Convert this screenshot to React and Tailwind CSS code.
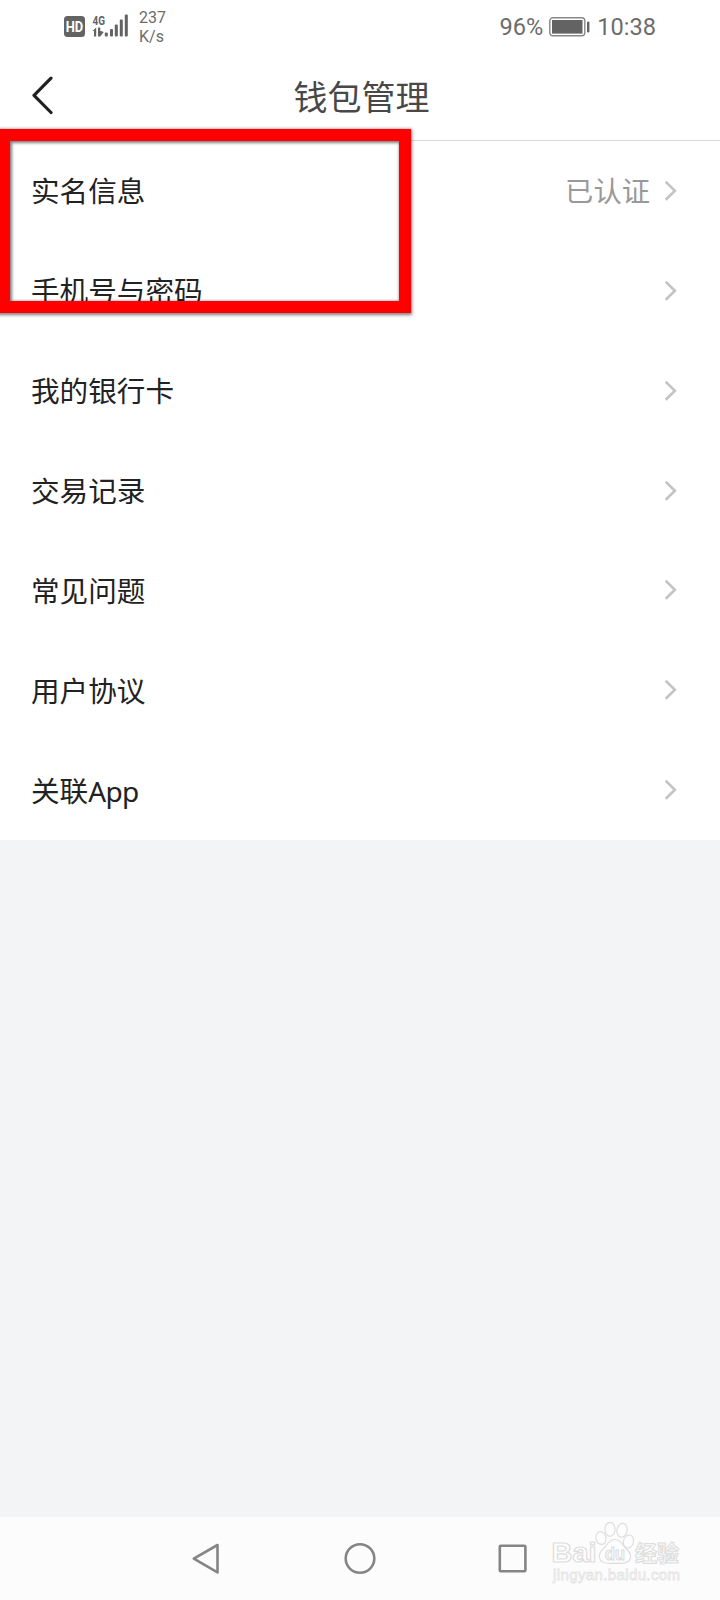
import React from "react";

const rows = [
  { label: "实名信息", value: "已认证" },
  { label: "手机号与密码" },
  { label: "我的银行卡" },
  { label: "交易记录" },
  { label: "常见问题" },
  { label: "用户协议" },
  { label: "关联", suffix: "App" },
];

function SignalIcons() {
  return (
    <svg width="68" height="28" viewBox="0 0 68 28" fill="#636363">
      <rect x="0" y="4" width="21" height="21" rx="3.5" />
      <text x="10.5" y="20" textAnchor="middle" fontFamily="Roboto, sans-serif" fontWeight="700" fontSize="15" textLength="17.5" lengthAdjust="spacingAndGlyphs" fill="#fff">HD</text>
      <text x="28.5" y="12.8" fontFamily="Roboto, sans-serif" fontWeight="700" fontSize="13.5" textLength="12.5" lengthAdjust="spacingAndGlyphs">4G</text>
      <path d="M28.5 19l3.7-3.6v9.2h-2.2V19zM34 15.4h2.2v3.3l3.600 1.200-3.600 4.700H34z" />
      <rect x="40.8" y="20.5" width="3" height="4" rx="1" />
      <rect x="46" y="17" width="3" height="7.5" rx="1" />
      <rect x="50.8" y="12.5" width="3" height="12" rx="1" />
      <rect x="55.8" y="7.5" width="3" height="17" rx="1" />
      <rect x="60.8" y="2.5" width="3" height="22" rx="1" />
    </svg>
  );
}

function Battery() {
  return (
    <svg width="42" height="20" viewBox="0 0 42 20" fill="none">
      <rect x="0.8" y="0.8" width="35" height="18" rx="3" stroke="#888" strokeWidth="1.4" />
      <rect x="3" y="3" width="30.5" height="13.6" fill="#636363" />
      <rect x="38" y="4.5" width="2.4" height="11" rx="1" fill="#636363" />
    </svg>
  );
}

function StatusBar() {
  return (
    <div className="flex h-[56px] shrink-0 items-start justify-between pl-[64px] pr-[64px] font-[Roboto,sans-serif] text-[#6c6c6c]">
      <div className="flex items-start">
        <div className="pt-[12px]">
          <SignalIcons />
        </div>
        <div className="ml-[7px] pt-[8px] text-[16px] leading-[19px]">
          <div>237</div>
          <div>K/s</div>
        </div>
      </div>
      <div className="flex items-center pt-[13px] text-[23.6px] leading-[28px]">
        <span>96%</span>
        <span className="ml-[6px]"><Battery /></span>
        <span className="ml-[6px]">10:38</span>
      </div>
    </div>
  );
}

function Header() {
  return (
    <header className="grid h-[85px] shrink-0 grid-cols-[1fr_auto_1fr] items-center border-b border-[#dcdcdc] pl-[33px] pr-[30px]">
      <svg className="-ml-[2px] -mt-[5px]" width="24" height="40" viewBox="0 0 24 40" fill="none" stroke="#222" strokeWidth="3.2" strokeLinecap="round" strokeLinejoin="round">
        <path d="M20 2.2L3 19.3L20 36.5" />
      </svg>
      <h1 className="-mt-[2px] text-[34px] leading-[50px] text-[#484848]">钱包管理</h1>
      <span className="w-6" />
    </header>
  );
}

function Row({ label, suffix, value }) {
  return (
    <li className="flex min-h-0 flex-1 items-center justify-between pl-[31px] pr-[42px]">
      <span className="pt-[1px] text-[28.6px] leading-[42px] text-[#222]">
        {label}
        {suffix && <span className="text-[28px] tracking-[-0.7px]">{suffix}</span>}
      </span>
      <span className="flex items-center">
        {value && <span className="mr-[14px] pt-[1px] text-[28.3px] leading-[42px] text-[#999]">{value}</span>}
        <svg width="14" height="22" viewBox="0 0 14 22" fill="none" stroke="#c4c4c4" strokeWidth="2.6">
          <path d="M1.7 1.7L10.9 10.7L1.7 19.7" />
        </svg>
      </span>
    </li>
  );
}

function Watermark() {
  return (
    <svg className="absolute left-[545px] top-0" width="150" height="72" viewBox="0 0 150 72" fill="#fdfdfd" stroke="#dedede" strokeWidth="1.2">
      <text x="6.5" y="44.5" fontFamily="'Liberation Sans', sans-serif" fontWeight="700" fontSize="28" textLength="45" lengthAdjust="spacingAndGlyphs">Bai</text>
      <ellipse cx="56" cy="21" rx="5" ry="6.5" transform="rotate(-12 56 21)" />
      <ellipse cx="65" cy="12.3" rx="5" ry="7" />
      <ellipse cx="77" cy="13.3" rx="5" ry="7" transform="rotate(10 77 13.3)" />
      <ellipse cx="83.5" cy="24.5" rx="5" ry="6.5" transform="rotate(15 83.5 24.5)" />
      <path d="M70 22.500c-5.500 0-7 4-10 7.500-3.500 4-6.500 6-5.500 11 1 4.500 5 6.200 15 5.200 10 1 15-.7 16-5.200 1-5-2.500-7-6-11-3-3.500-4-7.500-9.500-7.500z" />
      <text x="70" y="43" textAnchor="middle" fontFamily="'Liberation Sans', sans-serif" fontWeight="700" fontSize="19" textLength="20" lengthAdjust="spacingAndGlyphs">du</text>
      <text x="90" y="43.5" fontFamily="'Noto Sans CJK SC', sans-serif" fontWeight="700" fontSize="22">经验</text>
      <text x="8" y="62.500" fontFamily="'Liberation Sans', sans-serif" fontSize="15" textLength="127" stroke="#e4e4e4" strokeWidth="0.8">jingyan.baidu.com</text>
    </svg>
  );
}

function NavBar() {
  return (
    <nav className="relative flex h-[83px] shrink-0 items-center bg-[#fcfcfc] pl-[190px]">
      <svg width="342" height="36" viewBox="0 0 342 36" fill="none" stroke="#858585" strokeWidth="2.6" strokeLinejoin="round">
        <path d="M27.5 4V31.4L3.8 17.7Z" />
        <circle cx="170" cy="17.5" r="14.3" />
        <rect x="309.8" y="4.7" width="25.6" height="25.6" rx="1" />
      </svg>
      <Watermark />
    </nav>
  );
}

export default function App() {
  return (
    <div className="relative flex h-[1600px] w-[720px] flex-col overflow-hidden bg-[#f3f4f6] font-['Noto_Sans','Noto_Sans_CJK_SC',sans-serif]">
      <div className="flex h-[840px] shrink-0 flex-col bg-white">
        <StatusBar />
        <Header />
        <ul className="flex min-h-0 flex-1 flex-col">
          {rows.map((row) => (
            <Row key={row.label} {...row} />
          ))}
        </ul>
      </div>
      <main className="flex-1" />
      <NavBar />
      <div className="pointer-events-none absolute -left-[2px] top-[129px] h-[184px] w-[413px] border-[12px] border-[#ff0000] shadow-[0px_1px_3px_1px_rgba(0,0,0,0.5),inset_1px_1px_3px_1px_rgba(0,0,0,0.5)]" />
    </div>
  );
}
